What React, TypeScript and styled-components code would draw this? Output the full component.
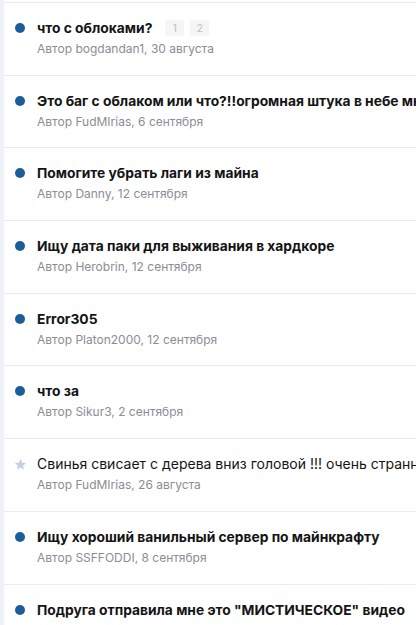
import React from "react";
import styled, { createGlobalStyle } from "styled-components";

const Global = createGlobalStyle`
  html, body { margin: 0; padding: 0; background: #eef1f5; }
  body { font-family: Inter, "Noto Sans", sans-serif; overflow: hidden; }
`;

const Page = styled.div`
  display: flex;
  padding-left: 4px;
  min-height: 625px;
`;

const List = styled.div`
  flex: 1;
  background: #ffffff;
  display: flex;
  flex-direction: column;
  padding-top: 2px;
  min-width: 0;
  overflow: hidden;
`;

const Row = styled.div`
  display: flex;
  align-items: flex-start;
  border-top: 1px solid #e9ebee;
  padding: 15px 0 15.7px 0;
  min-height: 41px;
`;

const Marker = styled.div`
  width: 33px;
  flex: none;
  height: 20px;
  display: flex;
  align-items: center;
  padding-left: 10px;
  box-sizing: border-box;
`;

const Dot = styled.span`
  width: 10px;
  height: 10px;
  margin-left: 1px;
  border-radius: 50%;
  background: #1b5d9b;
  display: block;
`;

const Main = styled.div`
  display: flex;
  flex-direction: column;
  gap: 1px;
  min-width: 0;
  flex: 1;
`;

const TitleLine = styled.div`
  display: flex;
  align-items: center;
  white-space: nowrap;
  height: 20px;
`;

const Title = styled.span<{ $read?: boolean }>`
  font-size: ${(p) => (p.$read ? "14px" : "13.8px")};
  line-height: 20px;
  font-weight: ${(p) => (p.$read ? 400 : 700)};
  color: #141414;
  white-space: nowrap;
`;

const Pages = styled.span`
  display: flex;
  gap: 6px;
  margin-left: 13px;
`;

const PageBadge = styled.span`
  display: inline-flex;
  align-items: center;
  justify-content: center;
  min-width: 19px;
  height: 16px;
  padding: 0 3px;
  box-sizing: border-box;
  border-radius: 3px;
  background: #f5f5f5;
  color: #bdbdbd;
  font-size: 10px;
`;

const Meta = styled.div`
  font-size: 12px;
  line-height: 20px;
  color: #8c8c96;
  white-space: nowrap;
`;

type Thread = {
  title: string;
  author: string;
  date: string;
  read?: boolean;
  pages?: string[];
};

const threads: Thread[] = [
  { title: "что с облоками?", author: "bogdandan1", date: "30 августа", pages: ["1", "2"] },
  { title: "Это баг с облаком или что?!!огромная штука в небе мне страшно", author: "FudMIrias", date: "6 сентября" },
  { title: "Помогите убрать лаги из майна", author: "Danny", date: "12 сентября" },
  { title: "Ищу дата паки для выживания в хардкоре", author: "Herobrin", date: "12 сентября" },
  { title: "Error305", author: "Platon2000", date: "12 сентября" },
  { title: "что за", author: "Sikur3", date: "2 сентября" },
  { title: "Свинья свисает с дерева вниз головой !!! очень странно", author: "FudMIrias", date: "26 августа", read: true },
  { title: "Ищу хороший ванильный сервер по майнкрафту", author: "SSFFODDI", date: "8 сентября" },
  { title: "Подруга отправила мне это \"МИСТИЧЕСКОЕ\" видео", author: "Lina", date: "9 сентября" },
];

const Star = () => (
  <svg width="13" height="13" viewBox="0 0 24 24">
    <path
      d="M12 1.5l3 7.1 7.5.6-5.7 4.9 1.7 7.4L12 17.6l-6.5 3.9 1.7-7.4L1.5 9.2 9 8.6z"
      fill="#c5d0de"
    />
  </svg>
);

export default function App() {
  return (
    <>
      <Global />
      <Page>
        <List>
          {threads.map((t, i) => (
            <Row key={i}>
              <Marker>{t.read ? <Star /> : <Dot />}</Marker>
              <Main>
                <TitleLine>
                  <Title $read={t.read}>{t.title}</Title>
                  {t.pages && (
                    <Pages>
                      {t.pages.map((p) => (
                        <PageBadge key={p}>{p}</PageBadge>
                      ))}
                    </Pages>
                  )}
                </TitleLine>
                <Meta>
                  Автор {t.author}, {t.date}
                </Meta>
              </Main>
            </Row>
          ))}
        </List>
      </Page>
    </>
  );
}
